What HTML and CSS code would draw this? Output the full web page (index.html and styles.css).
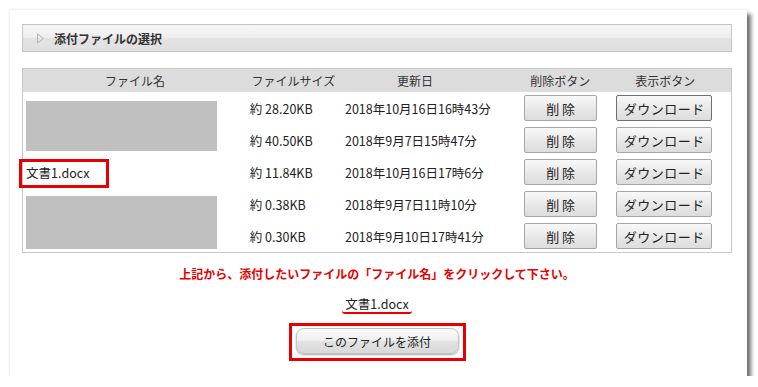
FILE: index.html
```html
<!DOCTYPE html>
<html>
<head>
    <meta charset="utf-8">
    <title>添付ファイルの選択</title>
    <link rel="stylesheet" href="styles.css">
</head>
<body>
    <div class="frame">
        <div class="section-head">
            <svg class="head-arrow" width="7" height="11" viewBox="0 0 7 11"><path d="M0.5 0.8 L6.3 5.5 L0.5 10.2 Z" fill="none" stroke="#b4b4b4" stroke-width="1"/></svg>
            <span class="head-title">添付ファイルの選択</span>
        </div>

        <table class="file-table">
            <colgroup>
                <col class="c-name"><col class="c-size"><col class="c-date"><col class="c-del"><col class="c-dl">
            </colgroup>
            <thead>
                <tr>
                    <th>ファイル名</th>
                    <th>ファイルサイズ</th>
                    <th>更新日</th>
                    <th class="col-del">削除ボタン</th>
                    <th class="col-dl">表示ボタン</th>
                </tr>
            </thead>
            <tbody>
                <tr>
                    <td class="name" rowspan="2"><div class="masked"></div></td>
                    <td class="size">約 28.20KB</td>
                    <td class="date">2018年10月16日16時43分</td>
                    <td class="col-del"><button class="btn btn-del">削 除</button></td>
                    <td class="col-dl"><button class="btn btn-dl focused">ダウンロード</button></td>
                </tr>
                <tr>
                    <td class="size">約 40.50KB</td>
                    <td class="date">2018年9月7日15時47分</td>
                    <td class="col-del"><button class="btn btn-del">削 除</button></td>
                    <td class="col-dl"><button class="btn btn-dl">ダウンロード</button></td>
                </tr>
                <tr>
                    <td class="name"><span class="file-link">文書1.docx</span><span class="mark-box"></span></td>
                    <td class="size">約 11.84KB</td>
                    <td class="date">2018年10月16日17時6分</td>
                    <td class="col-del"><button class="btn btn-del">削 除</button></td>
                    <td class="col-dl"><button class="btn btn-dl">ダウンロード</button></td>
                </tr>
                <tr>
                    <td class="name" rowspan="2"><div class="masked tall"></div></td>
                    <td class="size">約 0.38KB</td>
                    <td class="date">2018年9月7日11時10分</td>
                    <td class="col-del"><button class="btn btn-del">削 除</button></td>
                    <td class="col-dl"><button class="btn btn-dl">ダウンロード</button></td>
                </tr>
                <tr>
                    <td class="size">約 0.30KB</td>
                    <td class="date">2018年9月10日17時41分</td>
                    <td class="col-del"><button class="btn btn-del">削 除</button></td>
                    <td class="col-dl"><button class="btn btn-dl">ダウンロード</button></td>
                </tr>
            </tbody>
        </table>

        <p class="notice">上記から、添付したいファイルの「ファイル名」をクリックして下さい。</p>
        <p class="selected"><span class="selected-name">文書1.docx</span></p>
        <div class="attach-wrap">
            <div class="attach-mark">
                <button class="attach-btn">このファイルを添付</button>
            </div>
        </div>
    </div>
</body>
</html>
```

FILE: styles.css
```css
body {
    margin: 0;
    background: #fff;
    font-family: "Noto Sans CJK JP", "Liberation Sans", sans-serif;
    color: #222;
}

.frame {
    margin: 10px 0 0 10px;
    width: 737px;
    height: 366px;
    box-sizing: border-box;
    padding: 14px 15px 0 12px;
    background: #fff;
    box-shadow: 4px 4px 4px rgba(0, 0, 0, 0.55), 0 0 3px rgba(0, 0, 0, 0.12);
}

.section-head {
    height: 28px;
    box-sizing: border-box;
    border: 1px solid #c4c4c4;
    background: linear-gradient(#f6f6f6, #eeeeee 50%, #e3e3e3 50%, #e0e0e0);
    display: flex;
    align-items: center;
    padding-left: 14px;
    gap: 10px;
}

.head-title {
    font-size: 12px;
    font-weight: bold;
    color: #333;
}

.file-table {
    margin-top: 16px;
    width: 710px;
    border-collapse: collapse;
    table-layout: fixed;
    border: 1px solid #c8c8c8;
    font-size: 12.5px;
}

.c-name { width: 224px; }
.c-size { width: 93px; }
.c-date { width: 150px; }
.c-del { width: 120px; }
.c-dl { width: 121px; }

.file-table th {
    height: 23px;
    padding: 0;
    background: #dcdcdc;
    font-size: 12px;
    font-weight: normal;
    color: #333;
    text-align: center;
}

.file-table td {
    height: 32px;
    padding: 0;
    white-space: nowrap;
}

.file-table th.col-del {
    padding-left: 20px;
}

.file-table th.col-dl {
    padding-right: 11px;
}

.file-table td.col-del {
    padding-left: 34px;
}

.file-table td.col-dl {
    padding-left: 6px;
}

.file-table td.name {
    position: relative;
    padding-left: 3px;
}

.file-table td.size {
    padding-left: 3px;
}

.file-table td.date {
    padding-left: 5px;
}

.masked {
    width: 191px;
    height: 50px;
    margin-top: 4px;
    background: #c0c0c0;
}

.masked.tall {
    height: 53px;
    margin-top: 5px;
}

.mark-box {
    position: absolute;
    left: -4px;
    top: 3px;
    width: 90px;
    height: 29px;
    box-sizing: border-box;
    border: 3px solid #e60000;
}

.btn {
    height: 26px;
    padding: 0;
    border: 1px solid #a6a6a6;
    border-radius: 2px;
    background: linear-gradient(#f8f8f8, #e6e6e6 60%, #dddddd);
    font-family: inherit;
    font-size: 13px;
    color: #222;
    vertical-align: middle;
}

.btn-del {
    width: 73px;
}

.btn-dl {
    width: 96px;
    letter-spacing: 0.5px;
}

.btn-dl.focused {
    border-color: #707070;
}

.notice {
    margin: 12px 0 0;
    text-align: center;
    font-size: 12px;
    font-weight: bold;
    color: #e60000;
    line-height: 18px;
}

.selected {
    margin: 12px 0 0;
    text-align: center;
    font-size: 12.5px;
    line-height: 18px;
}

.selected-name {
    display: inline-block;
    padding: 0 3px;
    border-bottom: 2px solid #e60000;
    border-radius: 0 0 3px 3px;
    line-height: 17px;
}

.attach-wrap {
    margin-top: 9px;
    text-align: center;
}

.attach-mark {
    display: inline-block;
    border: 3px solid #e60000;
    padding: 2px 4px 4px;
}

.attach-btn {
    display: block;
    width: 163px;
    height: 26px;
    border: 1px solid #c2c2c2;
    border-radius: 8px;
    background: linear-gradient(#fbfbfb, #eeeeee 50%, #e2e2e2 51%, #d9d9d9);
    box-shadow: 0 1px 2px rgba(0, 0, 0, 0.35);
    font-family: inherit;
    font-size: 12px;
    color: #222;
}
```
